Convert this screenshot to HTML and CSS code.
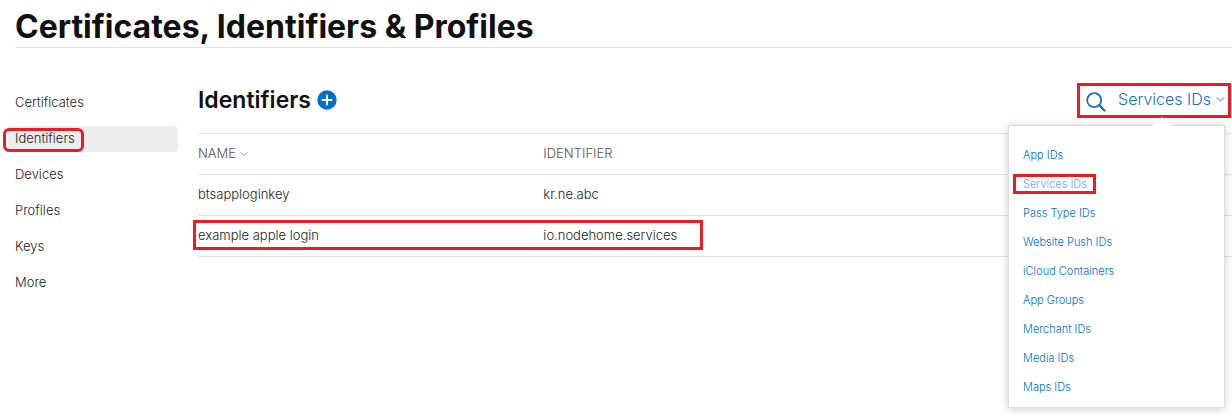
FILE: index.html
```html
<!DOCTYPE html>
<html lang="en">
<head>
    <meta charset="UTF-8">
    <title>Certificates, Identifiers &amp; Profiles</title>
    <meta name="viewport" content="width=device-width, initial-scale=1.0">
    <link rel="stylesheet" href="styles.css">
</head>
<body>

<header class="page-header">
    <h1>Certificates, Identifiers &amp; Profiles</h1>
</header>

<div class="layout">
    <nav class="sidebar">
        <a href="#">Certificates</a>
        <a href="#" class="active">Identifiers<span class="mark mark-nav"></span></a>
        <a href="#">Devices</a>
        <a href="#">Profiles</a>
        <a href="#">Keys</a>
        <a href="#">More</a>
    </nav>

    <main class="content">
        <div class="toolbar">
            <h2>Identifiers</h2>
            <button type="button" class="add" aria-label="Add identifier">
                <svg width="20" height="20" viewBox="0 0 20 20">
                    <circle cx="10" cy="10" r="9.7" fill="#0070c9"/>
                    <path d="M10 5.5v9M5.5 10h9" stroke="#fff" stroke-width="2" stroke-linecap="round"/>
                </svg>
            </button>

            <div class="filter">
                <button type="button" class="search" aria-label="Search">
                    <svg width="20" height="20" viewBox="0 0 20 20" fill="none" stroke="#1a6ec0">
                        <circle cx="8.2" cy="8.2" r="7" stroke-width="1.8"/>
                        <path d="M13.2 13.2l5.3 5.3" stroke-width="2.4" stroke-linecap="round"/>
                    </svg>
                </button>
                <button type="button" class="type-button">
                    Services IDs
                    <svg width="9" height="5" viewBox="0 0 9 5" fill="none" stroke="#7fb4e2" stroke-width="1.3">
                        <path d="M.5 .5l4 3.5 4-3.5"/>
                    </svg>
                </button>
                <span class="mark mark-filter"></span>

                <ul class="menu">
                    <li><a href="#">App IDs</a></li>
                    <li><a href="#" class="selected">Services IDs<span class="mark mark-menu"></span></a></li>
                    <li><a href="#">Pass Type IDs</a></li>
                    <li><a href="#">Website Push IDs</a></li>
                    <li><a href="#">iCloud Containers</a></li>
                    <li><a href="#">App Groups</a></li>
                    <li><a href="#">Merchant IDs</a></li>
                    <li><a href="#">Media IDs</a></li>
                    <li><a href="#">Maps IDs</a></li>
                </ul>
            </div>
        </div>

        <div class="table-wrap">
            <table>
                <thead>
                    <tr>
                        <th class="col-name">NAME
                            <svg width="8" height="5" viewBox="0 0 8 5" fill="none" stroke="#999">
                                <path d="M.5 .5l3.5 3 3.5-3"/>
                            </svg>
                        </th>
                        <th>IDENTIFIER</th>
                    </tr>
                </thead>
                <tbody>
                    <tr>
                        <td>btsapploginkey</td>
                        <td>kr.ne.abc</td>
                    </tr>
                    <tr>
                        <td>example apple login</td>
                        <td>io.nodehome.services</td>
                    </tr>
                </tbody>
            </table>
            <span class="mark mark-row"></span>
        </div>
    </main>
</div>

</body>
</html>
```
FILE: styles.css
```css
* {
    box-sizing: border-box;
}
body {
    min-height: 100vh;
    margin: 0;
    background: #fff;
    color: #222;
    font-family: Inter, "Liberation Sans", sans-serif;
    font-size: 13px;
    font-weight: 300;
    line-height: 20px;
}
a {
    text-decoration: none;
}
button {
    padding: 0;
    border: 0;
    background: none;
    font-family: inherit;
    cursor: pointer;
}
svg {
    display: block;
}
h1, h2 {
    margin: 0;
    color: #111;
    font-weight: 650;
}
h1 {
    font-size: 32px;
    line-height: 40px;
}
h2 {
    font-size: 23px;
    font-weight: 600;
    line-height: 32px;
}
.page-header {
    margin-left: 15px;
    padding-top: 7px;
    border-bottom: 1px solid #e3e3e3;
}
.layout {
    display: flex;
    gap: 20px;
    padding-left: 8px;
}

/* side navigation */
.sidebar {
    display: flex;
    flex-direction: column;
    flex: 0 0 170px;
    gap: 10px;
    padding-top: 42px;
}
.sidebar a {
    position: relative;
    padding: 2px 7px 4px;
    border-radius: 4px;
    color: #222;
}
.sidebar .active {
    background: #ededed;
}

/* heading row */
.content {
    flex: 1;
    min-width: 0;
    padding-top: 36px;
}
.toolbar {
    display: flex;
    align-items: center;
    height: 32px;
    margin-bottom: 17px;
}
.add {
    margin-left: 6px;
}
.filter {
    position: relative;
    z-index: 1;
    display: flex;
    align-items: flex-end;
    gap: 12px;
    height: 26px;
    margin-left: auto;
    padding-right: 7px;
}
.search {
    margin-bottom: 1px;
}
.type-button {
    display: flex;
    align-items: center;
    gap: 5px;
    margin-bottom: 2px;
    color: #1a6ec0;
    font-size: 16px;
    font-weight: 300;
    line-height: 24px;
}

/* drop-down under the type button */
.menu {
    position: absolute;
    top: 38px;
    right: 7px;
    width: 217px;
    margin: 0;
    padding: 14px 14px 6px;
    border: 1px solid #ddd;
    background: #fff;
    box-shadow: 0 1px 8px rgba(0, 0, 0, 0.2);
    list-style: none;
}
.menu::before {
    content: "";
    position: absolute;
    top: -9px;
    left: 143px;
    border: 10px solid transparent;
    border-top: 0;
    border-bottom: 9px solid #fff;
}
.menu li {
    height: 29px;
    font-size: 11px;
    line-height: 30px;
}
.menu a {
    position: relative;
    color: #0070c9;
}
.menu .selected {
    color: #66a9df;
}

/* table */
.table-wrap {
    position: relative;
}
table {
    width: 100%;
    border-collapse: collapse;
    border-top: 1px solid #e3e3e3;
}
th, td {
    padding: 9px 0 11px;
    border-bottom: 1px solid #e3e3e3;
    text-align: left;
}
th {
    color: #555;
    font-weight: 300;
}
th svg {
    display: inline-block;
    vertical-align: middle;
}
.col-name {
    width: 33.4%;
}

/* red highlight frames */
.mark {
    position: absolute;
    border: 3px solid #ed1c24;
    pointer-events: none;
}
.mark-nav {
    top: 2px;
    left: -5px;
    width: 81px;
    height: 24px;
    border-radius: 6px;
}
.mark-filter {
    top: -4px;
    right: 1px;
    width: 154px;
    height: 35px;
}
.mark-menu {
    top: -3px;
    left: -10px;
    width: 83px;
    height: 20px;
}
.mark-row {
    bottom: 7px;
    left: -5px;
    width: 510px;
    height: 30px;
}
```
